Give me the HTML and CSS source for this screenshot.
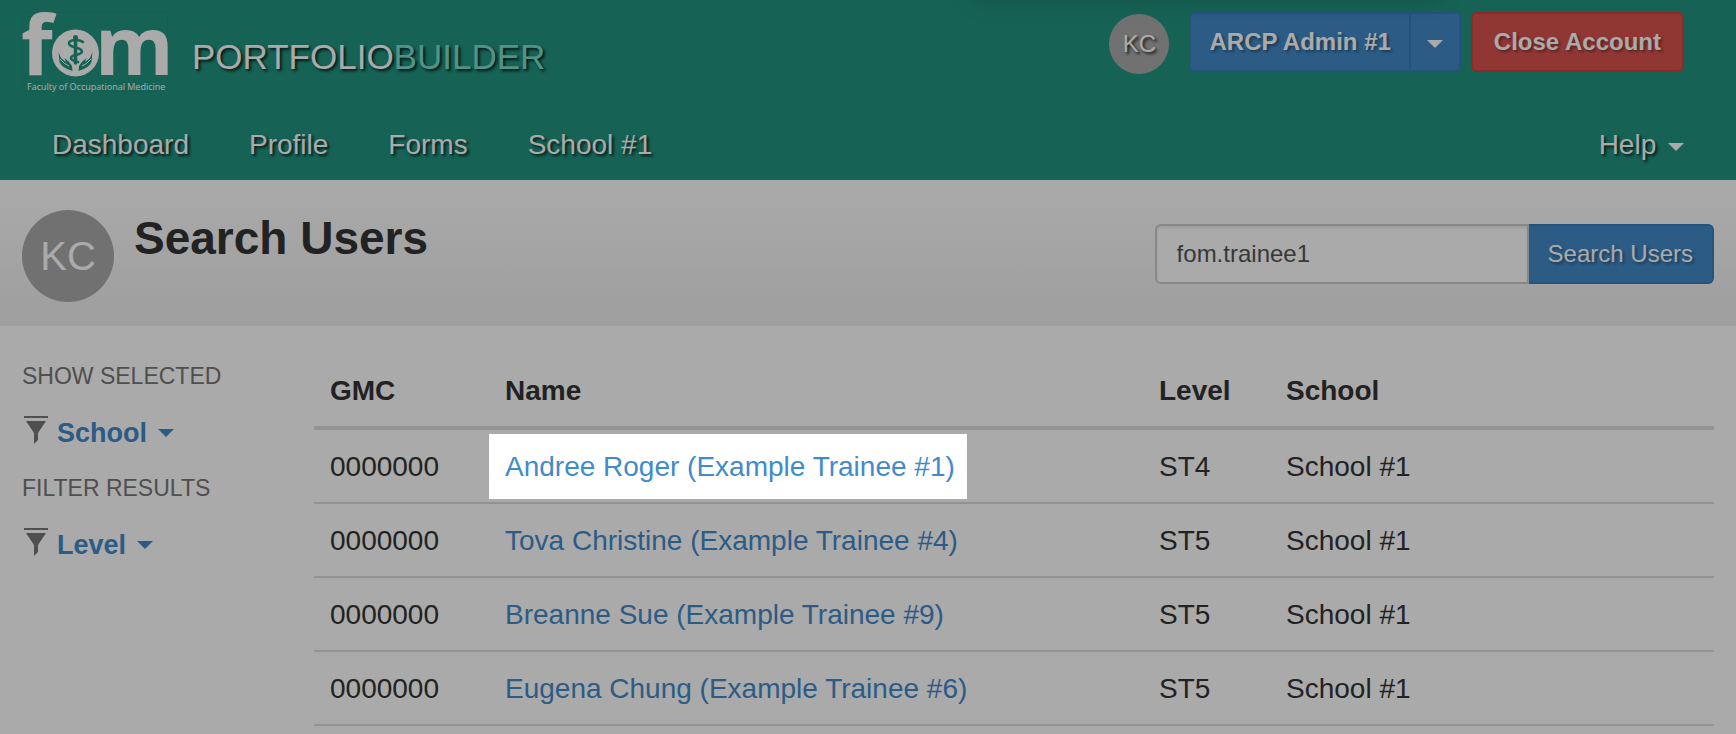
FILE: index.html
```html
<!DOCTYPE html>
<html lang="en">
<head>
<meta charset="utf-8">
<meta name="viewport" content="width=device-width, initial-scale=1">
<title>Search Users - Portfolio Builder</title>
<link rel="stylesheet" href="styles.css">
</head>
<body>
<header class="site-header">
  <div class="top-shadow"></div>
  <div class="top-row">
    <a class="brand" href="#">
      <svg class="logo" viewBox="0 0 146 80" role="img" aria-label="Faculty of Occupational Medicine">
        <rect class="logo-edge" x="0.5" y="0.5" width="145" height="79"/>
        <text class="logo-letter logo-tall" x="-1" y="63">f</text>
        <text class="logo-letter" x="73" y="63">m</text>
        <circle class="logo-fill" cx="53.5" cy="41" r="23.5"/>
        <g class="logo-line">
          <path d="M53.5 26V51" stroke-width="3.5"/>
          <path d="M61 30C57 27 47 27 47 31.5C47 36 60 35 60 39.5C60 43.5 49 42 49 46C49 48.5 53 49 56 50" stroke-width="2.5"/>
        </g>
        <g class="logo-mark">
          <circle cx="53.5" cy="25.5" r="2.5"/>
          <path d="M36.5 40L39 46L44 50L42.5 46Q47 49 50 54L50.5 59Q40 56 37.5 50Z"/>
          <path d="M70.5 40L68 46L63 50L64.5 46Q60 49 57 54L56.5 59Q67 56 69.5 50Z"/>
        </g>
        <path class="logo-crease" d="M38 47Q42 52 47 54M69 47Q65 52 60 54"/>
        <text class="logo-caption" x="5" y="78">Faculty of Occupational Medicine</text>
      </svg>
      <span class="brand-name">PORTFOLIO<span class="brand-light">BUILDER</span></span>
    </a>
    <div class="account">
      <span class="avatar avatar-small">KC</span>
      <div class="btn-group">
        <button class="btn btn-strong" type="button">ARCP Admin #1</button>
        <button class="btn btn-toggle" type="button" aria-label="Switch role"><span class="caret"></span></button>
      </div>
      <button class="btn btn-strong btn-danger" type="button">Close Account</button>
    </div>
  </div>
  <nav class="main-nav">
    <a href="#">Dashboard</a>
    <a href="#">Profile</a>
    <a href="#">Forms</a>
    <a href="#">School #1</a>
    <a class="nav-help" href="#">Help <span class="caret"></span></a>
  </nav>
</header>

<section class="page-head">
  <span class="avatar avatar-large">KC</span>
  <h1>Search Users</h1>
  <form class="search" onsubmit="return false">
    <input type="text" aria-label="Search users" value="fom.trainee1">
    <button class="btn btn-search" type="submit">Search Users</button>
  </form>
</section>

<main class="content">
  <aside class="filters">
    <h2>SHOW SELECTED</h2>
    <a class="filter" href="#">
      <svg class="funnel" viewBox="0 0 24 28" aria-hidden="true"><path d="M0 0H24V2H0ZM2 5H22L14 17V24L10 28V17Z"/></svg>
      School <span class="caret"></span>
    </a>
    <h2>FILTER RESULTS</h2>
    <a class="filter" href="#">
      <svg class="funnel" viewBox="0 0 24 28" aria-hidden="true"><path d="M0 0H24V2H0ZM2 5H22L14 17V24L10 28V17Z"/></svg>
      Level <span class="caret"></span>
    </a>
  </aside>
  <table class="users">
    <thead>
      <tr><th class="col-gmc">GMC</th><th>Name</th><th class="col-level">Level</th><th class="col-school">School</th></tr>
    </thead>
    <tbody>
      <tr><td>0000000</td><td><a class="spotlight" href="#">Andree Roger (Example Trainee #1)</a></td><td>ST4</td><td>School #1</td></tr>
      <tr><td>0000000</td><td><a href="#">Tova Christine (Example Trainee #4)</a></td><td>ST5</td><td>School #1</td></tr>
      <tr><td>0000000</td><td><a href="#">Breanne Sue (Example Trainee #9)</a></td><td>ST5</td><td>School #1</td></tr>
      <tr><td>0000000</td><td><a href="#">Eugena Chung (Example Trainee #6)</a></td><td>ST5</td><td>School #1</td></tr>
    </tbody>
  </table>
</main>
</body>
</html>
```
FILE: styles.css
```css
* { box-sizing: border-box; }

body {
  min-height: 100vh;
  margin: 0;
  background: #fff;
  color: #333;
  font: 28px/40px "Liberation Sans", Arial, sans-serif;
}

a { color: #428bca; text-decoration: none; }

.caret {
  display: inline-block;
  border: 8px solid transparent;
  border-top-color: currentColor;
  border-bottom: 0;
  vertical-align: middle;
}

/* Header */
.site-header {
  position: relative;
  padding: 12px 52px 0 22px;
  background: #219581;
  color: #fff;
}
.top-shadow {
  position: absolute;
  top: -24px;
  left: 56%;
  width: 27%;
  height: 16px;
  box-shadow: 0 8px 24px rgba(0, 0, 0, .2);
}
.top-row {
  display: flex;
  justify-content: space-between;
  align-items: flex-start;
  height: 96px;
}
.brand {
  display: flex;
  align-items: center;
  gap: 24px;
  color: #fff;
}
.logo { display: block; width: 146px; height: 80px; overflow: visible; }
.logo-edge { fill: none; stroke: #1f8e7b; }
.logo-letter { fill: #fff; font: bold 80px "Open Sans", sans-serif; }
.logo-tall { font-size: 82px; }
.logo-fill { fill: #fff; }
.logo-mark { fill: #219581; }
.logo-line { fill: none; stroke: #219581; stroke-linecap: round; }
.logo-crease { fill: none; stroke: #fff; }
.logo-caption { fill: #fff; font: 500 9px "Open Sans", sans-serif; }
.brand-name {
  padding-top: 10px;
  font-size: 35px;
  text-shadow: 2px 2px 3px rgba(0, 0, 0, .8);
}
.brand-light { color: #7edbcb; }

.account { display: flex; }
.avatar {
  display: flex;
  flex: none;
  align-items: center;
  justify-content: center;
  border-radius: 50%;
  background: #aaa;
  color: #fff;
}
.avatar-small {
  width: 60px;
  height: 60px;
  margin: 2px 20px 0 0;
  font-size: 24px;
  text-shadow: 2px 2px 3px rgba(0, 0, 0, .8);
}
.avatar-large { width: 92px; height: 92px; font-size: 40px; }

.btn {
  height: 60px;
  padding: 0 18px;
  border: 2px solid #357ebd;
  border-radius: 6px;
  background: #428bca;
  color: #fff;
  font: 24px/32px "Liberation Sans", Arial, sans-serif;
  text-shadow: 2px 2px 3px rgba(0, 0, 0, .4);
}
.btn-strong { font-weight: bold; }
.btn-group { display: flex; margin-right: 10px; }
.btn-group .btn-strong { border-radius: 6px 0 0 6px; }
.btn-toggle { padding: 0 16px; border-left: 0; border-radius: 0 6px 6px 0; }
.btn-danger { padding: 0 21px; border-color: #d43f3a; background: #d9534f; }

.main-nav { display: flex; }
.main-nav a {
  padding: 17px 30px 15px;
  color: #fff;
  text-shadow: 2px 2px 3px rgba(0, 0, 0, .8);
}
.main-nav .nav-help { margin-left: auto; padding-right: 0; }
.nav-help .caret { margin-left: 4px; }

/* Page heading */
.page-head {
  display: flex;
  align-items: flex-start;
  gap: 20px;
  padding: 30px 22px 24px;
  background: linear-gradient(#fff, #eee);
}
h1 { margin: 0; font-size: 46px; line-height: 56px; }
.search { display: flex; margin: 14px 0 0 auto; }
.search input {
  width: 374px;
  height: 60px;
  padding: 0 20px;
  border: 2px solid #ccc;
  border-radius: 6px 0 0 6px;
  background: #fff;
  color: #555;
  font: 24px/32px "Liberation Sans", Arial, sans-serif;
  box-shadow: inset 0 2px 2px rgba(0, 0, 0, .08);
}
.btn-search { padding: 0 19px; border-left: 0; border-radius: 0 6px 6px 0; }

/* Filters and results */
.content {
  display: grid;
  grid-template-columns: 292px 1fr;
  align-items: start;
  padding: 28px 22px 8px;
}
.filters h2 {
  margin: 0;
  color: #777;
  font-size: 23px;
  font-weight: normal;
  line-height: 44px;
}
.filter {
  display: flex;
  align-items: center;
  gap: 11px;
  height: 68px;
  padding-top: 2px;
  font-size: 27px;
  font-weight: bold;
}
.funnel {
  width: 24px;
  height: 28px;
  margin: 0 -2px 6px 2px;
  fill: #777;
}

.users {
  width: 100%;
  border-collapse: separate;
  border-spacing: 0;
  table-layout: fixed;
}
.col-gmc { width: 175px; }
.col-level { width: 127px; }
.col-school { width: 444px; }
.users th,
.users td {
  padding: 17px 16px 15px;
  border-bottom: 2px solid #ddd;
  text-align: left;
}
.users th { border-bottom-width: 4px; }
.users td a { display: inline-block; vertical-align: top; }

/* Highlighted link; its spread shadow dims the rest of the page */
.users td .spotlight {
  position: relative;
  z-index: 10;
  margin: -13px -12px -13px -16px;
  padding: 13px 12px 12px 16px;
  background: #fff;
  box-shadow: 0 0 0 4000px rgba(0, 0, 0, .333);
}
```
